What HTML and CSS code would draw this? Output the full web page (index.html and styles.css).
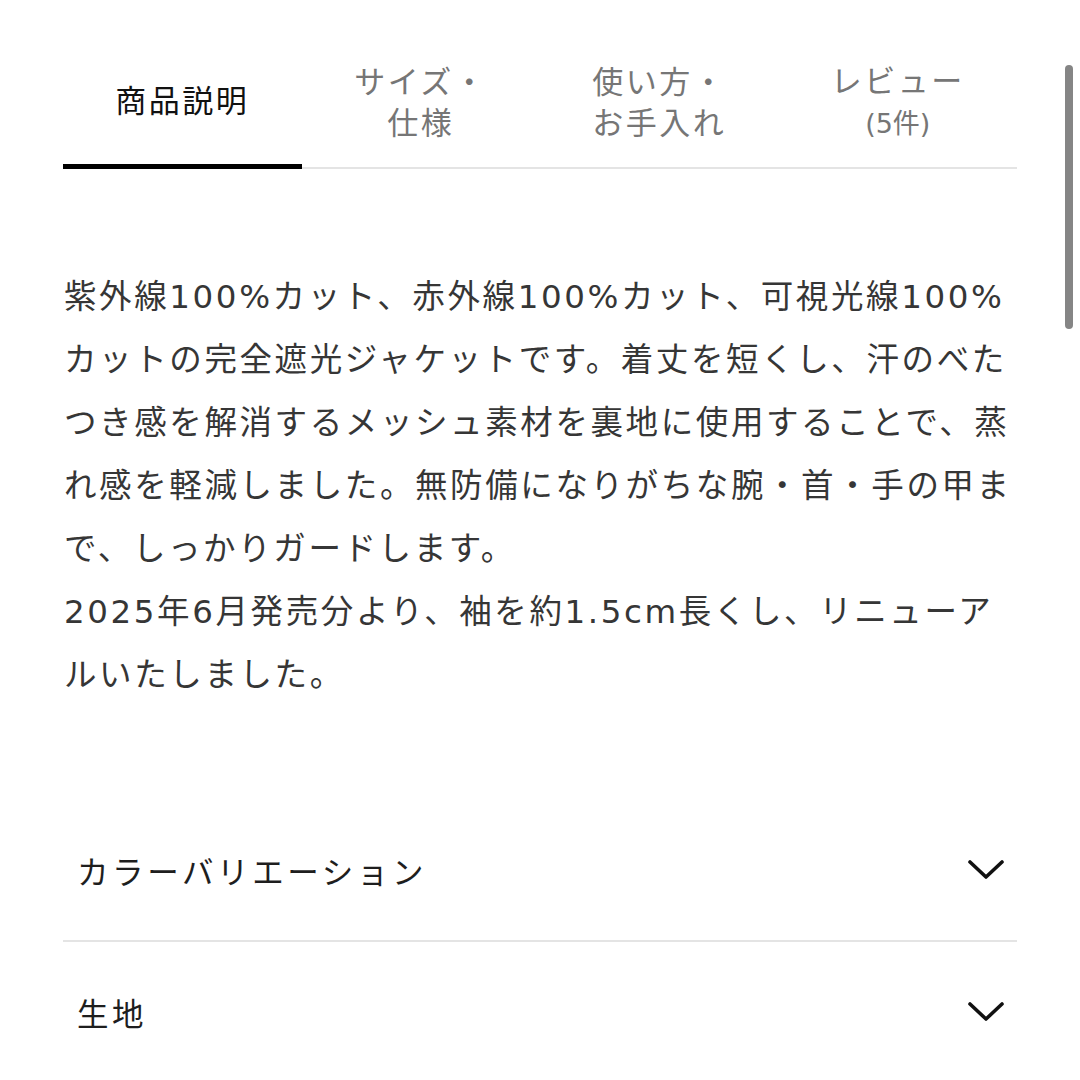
FILE: index.html
```html
<!DOCTYPE html>
<html lang="ja">
<head>
<meta charset="utf-8">
<title>商品説明</title>
<link rel="stylesheet" href="styles.css">
</head>
<body>
<div class="page">
  <nav class="tabs">
    <div class="tab active"><span>商品説明</span></div>
    <div class="tab"><span>サイズ・<br>仕様</span></div>
    <div class="tab"><span>使い方・<br>お手入れ</span></div>
    <div class="tab"><span>レビュー<br><small>(5件)</small></span></div>
  </nav>
  <p class="desc">紫外線100%カット、赤外線100%カット、可視光線100%カットの完全遮光ジャケットです。着丈を短くし、汗のべたつき感を解消するメッシュ素材を裏地に使用することで、蒸れ感を軽減しました。無防備になりがちな腕・首・手の甲まで、しっかりガードします。<br>2025年6月発売分より、袖を約1.5cm長くし、リニューアルいたしました。</p>
  <div class="accordion">
    <div class="acc-row">
      <span class="acc-title">カラーバリエーション</span>
      <svg class="chev" viewBox="0 0 36 20" width="36" height="20"><path d="M2 2 L18 17 L34 2" fill="none" stroke="#111" stroke-width="3.6" stroke-linecap="round" stroke-linejoin="round"/></svg>
    </div>
    <div class="acc-row">
      <span class="acc-title">生地</span>
      <svg class="chev" viewBox="0 0 36 20" width="36" height="20"><path d="M2 2 L18 17 L34 2" fill="none" stroke="#111" stroke-width="3.6" stroke-linecap="round" stroke-linejoin="round"/></svg>
    </div>
  </div>
</div>
<div class="scrollbar"></div>
</body>
</html>
```
FILE: styles.css
```css
html, body {
  margin: 0;
  padding: 0;
  background: #fff;
  overflow: hidden;
}
body {
  font-family: "Noto Sans CJK JP", "Noto Sans", sans-serif;
  width: 1080px;
  height: 1080px;
  position: relative;
}
.page {
  width: 954px;
  margin-left: 63px;
  padding-top: 39px;
}
.tabs {
  display: flex;
  border-bottom: 2px solid #e4e4e4;
}
.tab {
  flex: 1;
  display: flex;
  align-items: center;
  justify-content: center;
  text-align: center;
  font-family: "DejaVu Sans", "Noto Sans CJK JP", sans-serif;
  font-size: 31px;
  line-height: 41px;
  letter-spacing: 2.5px;
  color: #767676;
  margin-bottom: -2px;
}
.tab small {
  font-size: 27px;
  letter-spacing: 0;
}
.tab.active {
  color: #111;
  height: 125px;
  border-bottom: 5px solid #000;
}
.tab:not(.active) {
  height: 127px;
  padding-bottom: 3px;
}
.desc {
  margin: 97px 0 0 1px;
  font-family: "DejaVu Sans", "Noto Sans CJK JP", sans-serif;
  font-size: 32.5px;
  line-height: 63px;
  letter-spacing: 2.6px;
  color: #363636;
  line-break: strict;
}
.accordion {
  margin-top: 93px;
}
.acc-row {
  display: flex;
  align-items: center;
  justify-content: space-between;
  height: 140px;
  padding: 0 13px 0 14px;
  border-bottom: 2px solid #e4e4e4;
}
.acc-row:last-child {
  border-bottom: none;
}
.acc-title {
  font-size: 31.5px;
  letter-spacing: 3.6px;
  color: #1e1e1e;
}
.chev {
  display: block;
}
.scrollbar {
  position: absolute;
  left: 1065px;
  top: 65px;
  width: 8px;
  height: 264px;
  border-radius: 4px;
  background: #858585;
}
```
